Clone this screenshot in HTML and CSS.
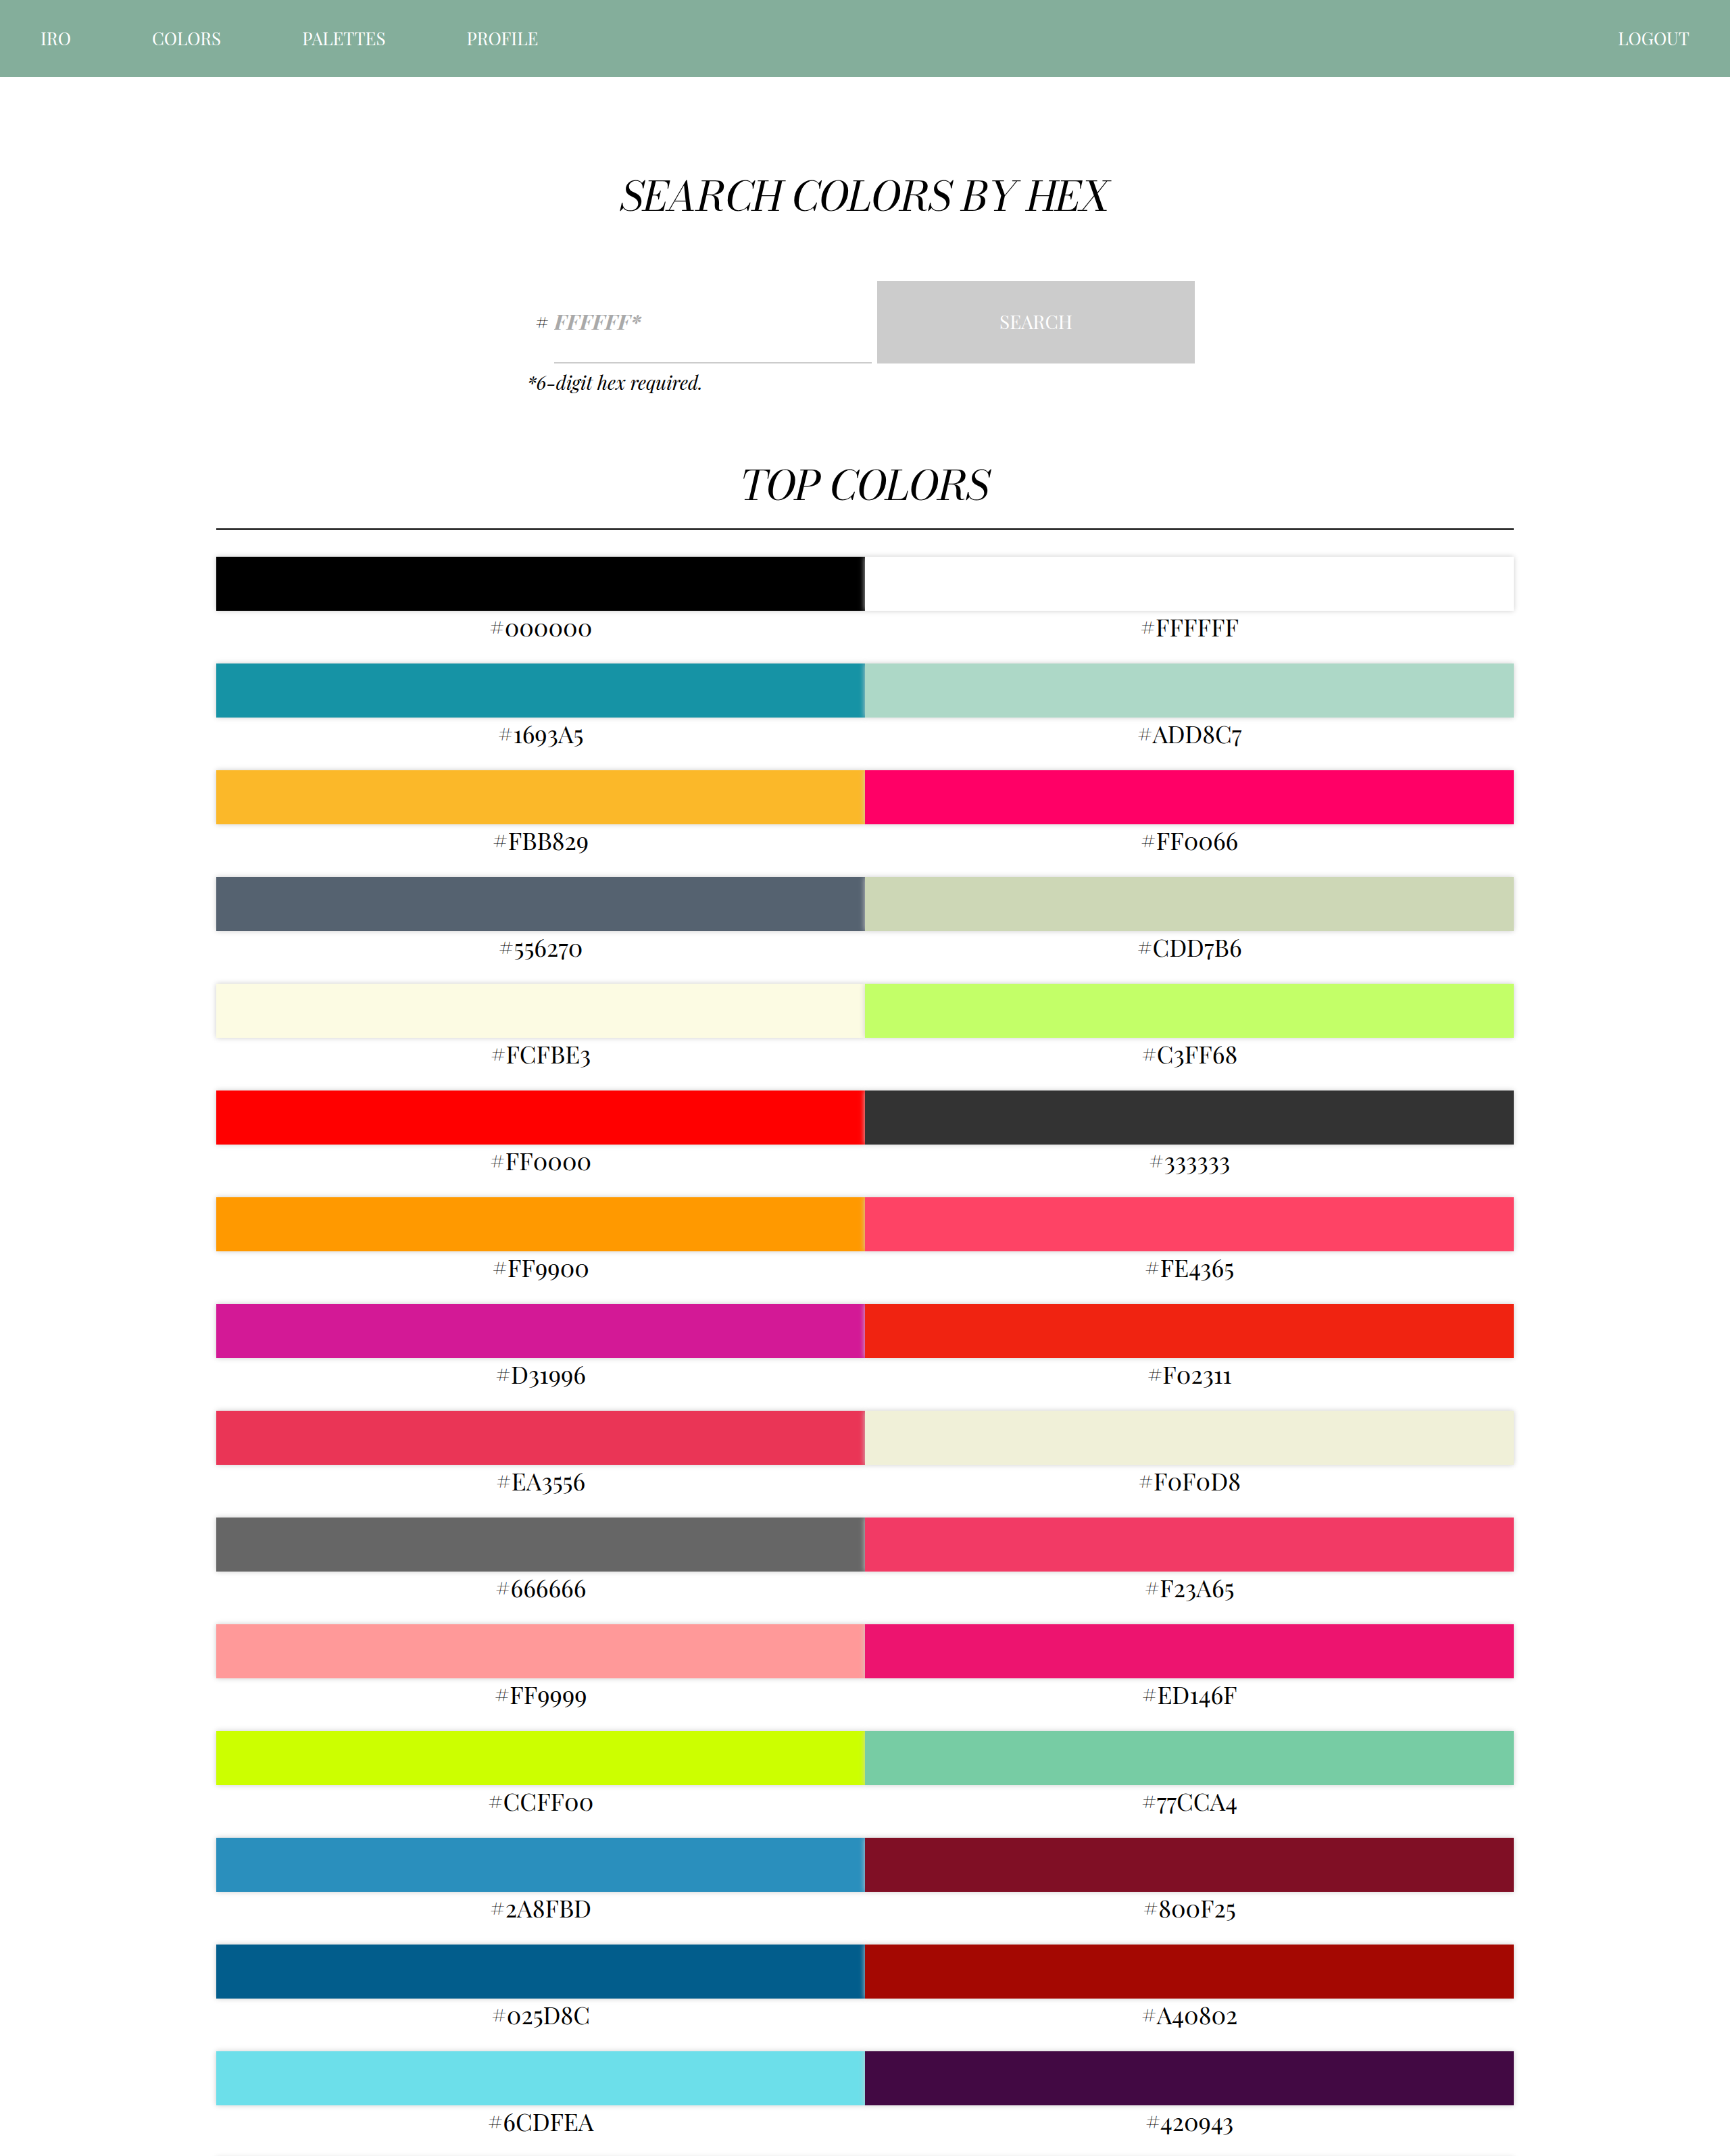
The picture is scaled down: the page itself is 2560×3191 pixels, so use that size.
FILE: index.html
```html
<!DOCTYPE html>
<html lang="en">
<head>
  <meta charset="utf-8">
  <meta name="viewport" content="width=device-width, initial-scale=1">
  <title>Iro</title>
  <link rel="stylesheet" href="styles.css">
</head>
<body>
  <nav class="navbar">
    <a class="nav-link" href="#">IRO</a>
    <a class="nav-link" href="#">COLORS</a>
    <a class="nav-link" href="#">PALETTES</a>
    <a class="nav-link" href="#">PROFILE</a>
    <a class="nav-link nav-logout" href="#">LOGOUT</a>
  </nav>
  <main class="content">
    <h1 class="heading">SEARCH COLORS BY HEX</h1>
    <form class="search">
      <div class="search-row">
        <label class="search-label" for="hex">#</label>
        <input class="search-input" id="hex" type="text" maxlength="6" placeholder="FFFFFF*">
        <button class="search-button" type="submit">SEARCH</button>
      </div>
      <p class="search-note">*6-digit hex required.</p>
    </form>
    <h2 class="heading heading-ruled">TOP COLORS</h2>
    <ul class="colors">
      <li class="color"><div class="swatch" style="background:#000000"></div><span class="hex">#000000</span></li>
      <li class="color"><div class="swatch" style="background:#FFFFFF"></div><span class="hex">#FFFFFF</span></li>
      <li class="color"><div class="swatch" style="background:#1693A5"></div><span class="hex">#1693A5</span></li>
      <li class="color"><div class="swatch" style="background:#ADD8C7"></div><span class="hex">#ADD8C7</span></li>
      <li class="color"><div class="swatch" style="background:#FBB829"></div><span class="hex">#FBB829</span></li>
      <li class="color"><div class="swatch" style="background:#FF0066"></div><span class="hex">#FF0066</span></li>
      <li class="color"><div class="swatch" style="background:#556270"></div><span class="hex">#556270</span></li>
      <li class="color"><div class="swatch" style="background:#CDD7B6"></div><span class="hex">#CDD7B6</span></li>
      <li class="color"><div class="swatch" style="background:#FCFBE3"></div><span class="hex">#FCFBE3</span></li>
      <li class="color"><div class="swatch" style="background:#C3FF68"></div><span class="hex">#C3FF68</span></li>
      <li class="color"><div class="swatch" style="background:#FF0000"></div><span class="hex">#FF0000</span></li>
      <li class="color"><div class="swatch" style="background:#333333"></div><span class="hex">#333333</span></li>
      <li class="color"><div class="swatch" style="background:#FF9900"></div><span class="hex">#FF9900</span></li>
      <li class="color"><div class="swatch" style="background:#FE4365"></div><span class="hex">#FE4365</span></li>
      <li class="color"><div class="swatch" style="background:#D31996"></div><span class="hex">#D31996</span></li>
      <li class="color"><div class="swatch" style="background:#F02311"></div><span class="hex">#F02311</span></li>
      <li class="color"><div class="swatch" style="background:#EA3556"></div><span class="hex">#EA3556</span></li>
      <li class="color"><div class="swatch" style="background:#F0F0D8"></div><span class="hex">#F0F0D8</span></li>
      <li class="color"><div class="swatch" style="background:#666666"></div><span class="hex">#666666</span></li>
      <li class="color"><div class="swatch" style="background:#F23A65"></div><span class="hex">#F23A65</span></li>
      <li class="color"><div class="swatch" style="background:#FF9999"></div><span class="hex">#FF9999</span></li>
      <li class="color"><div class="swatch" style="background:#ED146F"></div><span class="hex">#ED146F</span></li>
      <li class="color"><div class="swatch" style="background:#CCFF00"></div><span class="hex">#CCFF00</span></li>
      <li class="color"><div class="swatch" style="background:#77CCA4"></div><span class="hex">#77CCA4</span></li>
      <li class="color"><div class="swatch" style="background:#2A8FBD"></div><span class="hex">#2A8FBD</span></li>
      <li class="color"><div class="swatch" style="background:#800F25"></div><span class="hex">#800F25</span></li>
      <li class="color"><div class="swatch" style="background:#025D8C"></div><span class="hex">#025D8C</span></li>
      <li class="color"><div class="swatch" style="background:#A40802"></div><span class="hex">#A40802</span></li>
      <li class="color"><div class="swatch" style="background:#6CDFEA"></div><span class="hex">#6CDFEA</span></li>
      <li class="color"><div class="swatch" style="background:#420943"></div><span class="hex">#420943</span></li>
      <li class="color"><div class="swatch"></div></li>
      <li class="color"><div class="swatch"></div></li>
    </ul>
  </main>
</body>
</html>
```
FILE: styles.css
```css
* {
  box-sizing: border-box;
}

body {
  display: flex;
  flex-direction: column;
  height: 100vh;
  margin: 0;
  background: #fff;
  color: #000;
  font-family: "Playfair Display", "Liberation Serif", serif;
}

.navbar {
  display: flex;
  flex: none;
  gap: 120px;
  padding: 42px 60px;
  background: #84ae9b;
  font-size: 26px;
  line-height: 30px;
}

.nav-link {
  color: #fff;
  text-decoration: none;
}

.nav-logout {
  margin-left: auto;
}

/* The list runs on past the bottom of the window */
.content {
  flex: 1;
  min-height: 0;
  padding: 140px 12.5% 0;
  overflow: hidden;
}

.heading {
  margin: 0;
  font-family: "Bodoni Moda", "Playfair Display", "Liberation Serif", serif;
  font-size: 60px;
  font-style: italic;
  font-weight: 400;
  line-height: 72px;
  text-align: center;
}

.heading-ruled {
  padding-bottom: 28px;
  border-bottom: 2px solid #000;
}

.search {
  max-width: 1000px;
  margin: 90px auto 100px;
}

.search-row {
  display: flex;
  align-items: center;
  gap: 8px;
  padding: 0 12px;
}

.search-label {
  width: 20px;
  padding-bottom: 4px;
  font-size: 32px;
}

.search-input,
.search-button {
  flex: 1;
  min-width: 0;
  height: 122px;
  padding: 0 0 4px;
  border: 0;
  border-radius: 0;
  font-family: inherit;
}

.search-input {
  border-bottom: 2px solid #ccc;
  background: transparent;
  font-size: 32px;
  font-style: italic;
  font-weight: 700;
  outline: 0;
}

.search-input::placeholder {
  color: #a9a9a9;
  opacity: 1;
}

.search-button {
  background: #ccc;
  color: #fff;
  font-size: 28px;
}

.search-note {
  margin: 12px 0 0;
  font-size: 28px;
  font-style: italic;
  line-height: 32px;
}

.colors {
  display: grid;
  grid-template-columns: 1fr 1fr;
  row-gap: 32px;
  margin: 40px 0 0;
  padding: 0;
  list-style: none;
}

.swatch {
  height: 80px;
  box-shadow: 0 0 8px #ccc;
}

.hex {
  display: block;
  font-size: 36px;
  line-height: 46px;
  text-align: center;
}
```
